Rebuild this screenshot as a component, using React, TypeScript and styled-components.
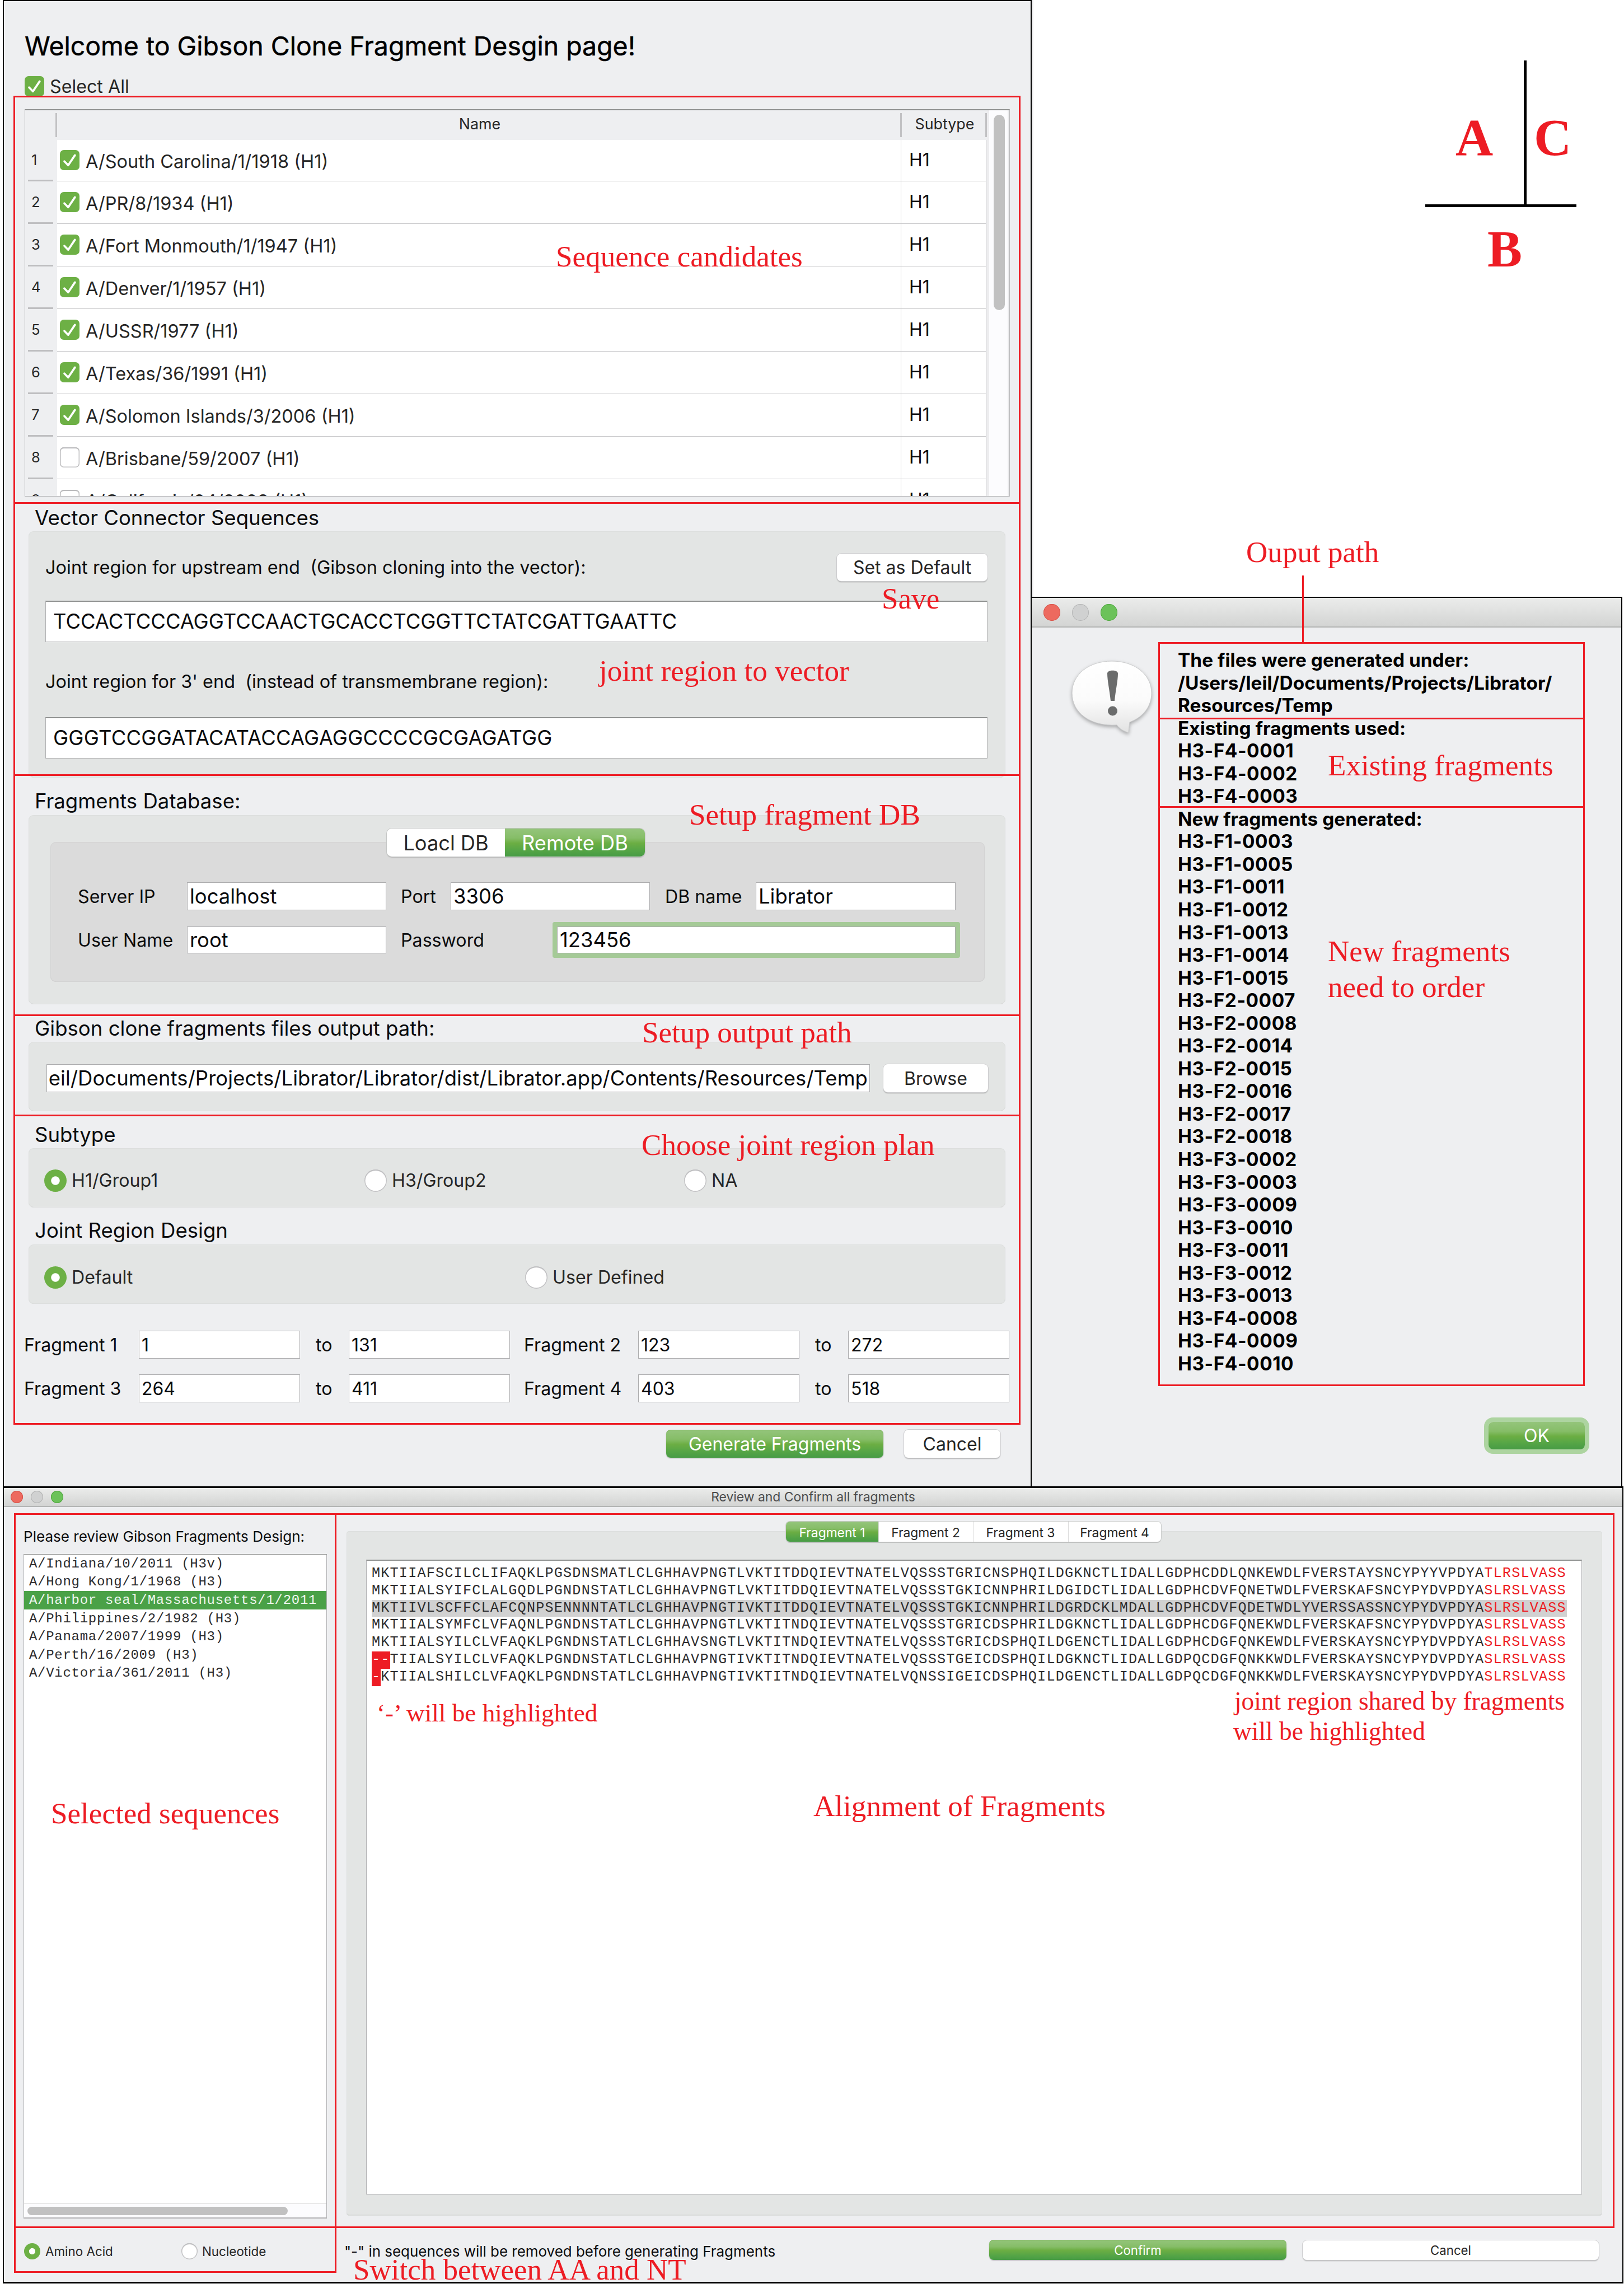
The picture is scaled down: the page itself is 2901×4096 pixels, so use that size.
import React from 'react';
import styled, { createGlobalStyle, css } from 'styled-components';

const RED = '#ed1c24';
const SANS = 'Inter, "Liberation Sans", sans-serif';
const SERIF = '"Liberation Serif", serif';
const MONO = '"Courier New", "Liberation Mono", monospace';
const GREEN = 'linear-gradient(180deg, #94c57b 0%, #86bd68 34%, #6cae43 52%, #55a546 78%, #479b45 100%)';

const Global = createGlobalStyle`
  *, *::before, *::after { box-sizing: border-box; }
  body { margin: 0; background: #fff; font-family: ${SANS}; color: #0b0c0e; }
`;

/* ---------- page frame ---------- */

const Page = styled.main`
  position: relative;
  width: 2901px;
  height: 4096px;
  padding-left: 5px;
  overflow: hidden;
  background: #fff;
`;

const UpperRow = styled.div`
  display: flex;
  height: 2655px;
`;

const SetupWindow = styled.section`
  width: 1838px;
  height: 2655px;
  flex: none;
  display: flex;
  flex-direction: column;
  border: 2px solid #000;
  border-bottom: 0;
  background: #eeeff1;
  box-shadow: 3px 0 0 #ececee;
`;

const RightColumn = styled.div`
  width: 1055px;
  flex: none;
  display: flex;
  flex-direction: column;
`;

const LegendArea = styled.div`
  height: 1066px;
  flex: none;
`;

const ResultWindow = styled.section`
  position: relative;
  height: 1589px;
  display: flex;
  flex-direction: column;
  border-top: 2px solid #000;
  border-right: 2px solid #000;
  background: #eeeff1;
`;

const ReviewWindow = styled.section`
  width: 2895px;
  height: 1424px;
  display: flex;
  flex-direction: column;
  border: 3px solid #000;
  border-left-width: 2px;
  border-right-width: 2px;
  background: #eeeff1;
`;

/* ---------- shared controls ---------- */

const buttonLook = css`
  display: flex;
  align-items: center;
  justify-content: center;
  border-radius: 8px;
  white-space: nowrap;
`;

const Button = styled.div<{ $w: number; $h?: number; $size?: number; $primary?: boolean; $ring?: boolean }>`
  ${buttonLook}
  flex: none;
  width: ${(p) => p.$w}px;
  height: ${(p) => p.$h ?? 50}px;
  font-size: ${(p) => p.$size ?? 32}px;
  color: ${(p) => (p.$primary ? '#fff' : '#262626')};
  background: ${(p) => (p.$primary ? GREEN : '#fff')};
  box-shadow: ${(p) =>
    p.$ring
      ? '0 0 0 8px #add4a0'
      : p.$primary
        ? 'inset 0 1px 0 #7db35c, 0 1px 2px rgba(0,0,0,.28)'
        : '0 0 0 1px #cdcdcf, 0 2px 2px rgba(0,0,0,.28)'};
`;

const CheckShape = styled.span<{ $on?: boolean }>`
  width: 35px;
  height: 36px;
  flex: none;
  display: block;
  border-radius: 7px;
  background: ${(p) => (p.$on ? '#6db045' : '#fff')};
  box-shadow: ${(p) => (p.$on ? 'none' : 'inset 0 0 0 1.5px #bcbcbe, inset 0 2px 1px #b0b0b2')};
`;

const Check = ({ on }: { on?: boolean }) => (
  <CheckShape $on={on}>
    {on && (
      <svg width="35" height="36" viewBox="0 0 35 36" fill="none">
        <path d="M8 20.2 L14.8 27.2 L26.8 9.4" stroke="#fff" strokeWidth="3.7" strokeLinecap="round" strokeLinejoin="round" />
      </svg>
    )}
  </CheckShape>
);

const RadioDot = styled.span<{ $on?: boolean; $d: number }>`
  width: ${(p) => p.$d}px;
  height: ${(p) => p.$d}px;
  flex: none;
  border-radius: 50%;
  background: ${(p) => (p.$on ? 'radial-gradient(circle closest-side, #fff 0 36%, #6db045 41%)' : '#fff')};
  box-shadow: ${(p) => (p.$on ? 'none' : 'inset 0 0 0 1.5px #c2c2c4, inset 0 2px 1px #b4b4b6')};
`;

const RadioItem = styled.label<{ $w?: number; $size?: number; $gap?: number; $drop?: number }>`
  display: flex;
  align-items: center;
  gap: ${(p) => p.$gap ?? 9}px;
  width: ${(p) => (p.$w ? `${p.$w}px` : 'auto')};
  padding-top: ${(p) => p.$drop ?? 0}px;
  font-size: ${(p) => p.$size ?? 32.2}px;
  line-height: 1;
  color: #262626;
  white-space: nowrap;
  span + span { padding-top: 2px; }
`;

type RadioProps = { on?: boolean; text: string; w?: number; d?: number; size?: number; gap?: number; drop?: number };

const Radio = ({ on, text, w, d = 40, size, gap, drop }: RadioProps) => (
  <RadioItem $w={w} $size={size} $gap={gap} $drop={drop}>
    <RadioDot $on={on} $d={d} />
    <span>{text}</span>
  </RadioItem>
);

const Field = styled.div<{ $w: number; $h?: number; $size?: number; $pad?: number; $end?: boolean; $focus?: boolean }>`
  width: ${(p) => p.$w}px;
  height: ${(p) => p.$h ?? 50}px;
  flex: none;
  display: flex;
  align-items: center;
  justify-content: ${(p) => (p.$end ? 'flex-end' : 'flex-start')};
  padding: 2px ${(p) => p.$pad ?? 4}px 0;
  overflow: hidden;
  border: 1px solid #acacae;
  background: #fff;
  font-size: ${(p) => p.$size ?? 36.4}px;
  letter-spacing: ${(p) => (p.$end ? '0.09px' : 'normal')};
  line-height: 1.2;
  white-space: nowrap;
  box-shadow: ${(p) => (p.$focus ? '0 0 0 8px #a5ca97' : 'none')};
  border-radius: ${(p) => (p.$focus ? '1px' : '0')};
`;

const SequenceField = styled.div<{ $top: number; $track?: number }>`
  margin-top: ${(p) => p.$top}px;
  height: 74px;
  display: flex;
  align-items: center;
  padding: 0 13px 1px;
  border: 1px solid #b2b2b4;
  border-top: 2px solid #8f9190;
  background: #fff;
  font-size: 36.4px;
  letter-spacing: ${(p) => p.$track ?? 0}px;
  white-space: nowrap;
`;

const Label = styled.span<{ $w?: number; $ml?: number; $size?: number }>`
  width: ${(p) => (p.$w ? `${p.$w}px` : 'auto')};
  margin-left: ${(p) => p.$ml ?? 0}px;
  flex: none;
  font-size: ${(p) => p.$size ?? 32.2}px;
  line-height: 1;
  padding-top: 2px;
  white-space: pre;
`;

const SectionTitle = styled.h2<{ $h: number; $top: number }>`
  height: ${(p) => p.$h}px;
  margin: 0;
  padding: ${(p) => p.$top}px 0 0 55px;
  display: flex;
  align-items: center;
  font-size: 36.6px;
  font-weight: 400;
  line-height: 1;
  white-space: nowrap;
`;

const Group = styled.div<{ $h: number; $pad: string }>`
  height: ${(p) => p.$h}px;
  width: 1745px;
  flex: none;
  margin-left: 44px;
  padding: ${(p) => p.$pad};
  border-radius: 9px;
  background: #e3e5e4;
  box-shadow: inset 0 0 0 1px #dcdedd, inset 0 -1px 0 #d2d4d3;
`;

const Line = styled.div<{ $h?: number; $top?: number; $gap?: number; $left?: number; $between?: boolean }>`
  display: flex;
  align-items: center;
  justify-content: ${(p) => (p.$between ? 'space-between' : 'flex-start')};
  height: ${(p) => (p.$h ? `${p.$h}px` : 'auto')};
  margin-top: ${(p) => p.$top ?? 0}px;
  gap: ${(p) => p.$gap ?? 0}px;
  padding-left: ${(p) => p.$left ?? 0}px;
`;

/* ---------- sequence table ---------- */

const PageTitle = styled.h1`
  margin: 26px 0 0 37px;
  height: 108px;
  display: flex;
  align-items: center;
  font-size: 46.45px;
  font-weight: 400;
  -webkit-text-stroke: 0.5px #000;
  color: #000;
  white-space: nowrap;
`;

const SelectAll = styled.div`
  display: flex;
  align-items: center;
  gap: 10px;
  height: 36px;
  margin-left: 37px;
  font-size: 32.2px;
  color: #262626;
`;

const Table = styled.div`
  width: 1760px;
  height: 692px;
  flex: none;
  margin: 23px 0 0 37px;
  display: flex;
  overflow: hidden;
  border: 1px solid #b2b2b4;
  border-top: 2px solid #8f9190;
  border-right: 2px solid #c0c0c2;
`;

const TableMain = styled.div`
  flex: 1;
  height: 689px;
  overflow: hidden;
`;

const HeadRow = styled.div`
  display: flex;
  align-items: center;
  height: 53px;
  background: #eeeff1;
  font-size: 26.8px;
  color: #262626;
`;

const HeadCell = styled.div<{ $w: number }>`
  width: ${(p) => p.$w}px;
  height: 43px;
  display: flex;
  align-items: center;
  justify-content: center;
  padding-bottom: 5px;
  padding-left: 4px;
  border-right: 3px solid #c1c1c3;
`;

const BodyRow = styled.div<{ $first?: boolean }>`
  display: flex;
  height: ${(p) => (p.$first ? 74 : 76)}px;
`;

const IndexCell = styled.div`
  width: 57px;
  display: flex;
  flex-direction: column;
  background: #eeeff1;
  font-size: 25.5px;
  color: #262626;
  span { flex: 1; display: flex; align-items: center; padding-left: 11px; }
  i { height: 3px; margin: 0 7px 0 5px; background: #bebec0; }
`;

const NameCell = styled.div`
  width: 1508px;
  display: flex;
  align-items: center;
  gap: 11px;
  padding: 0 0 1px 5px;
  background: #fff;
  border-bottom: 1px solid #c6c6c8;
  border-right: 1px solid #c6c6c8;
  font-size: 32.5px;
  color: #262626;
  b { font-weight: 400; padding-top: 4px; }
`;

const TypeCell = styled.div`
  width: 152px;
  display: flex;
  align-items: center;
  padding: 0 0 2px 14px;
  background: #fff;
  border-bottom: 1px solid #c6c6c8;
  border-right: 1px solid #c6c6c8;
  font-size: 32px;
`;

const VScroll = styled.div`
  width: 38px;
  padding: 8px 0 0 8px;
  border-left: 3px solid #ececee;
  border-right: 2px solid #ececee;
  background: #fcfcfe;
`;

const VThumb = styled.div`
  width: 20px;
  height: 349px;
  border-radius: 10px;
  background: #c1c1c1;
`;

/* ---------- database group ---------- */

const DbTabs = styled.div`
  position: relative;
  display: flex;
  width: 461px;
  height: 50px;
  margin: 0 0 -26px 640px;
  border-radius: 9px;
  overflow: hidden;
  box-shadow: 0 0 0 1px #c6c8c7, 0 2px 2px rgba(0,0,0,.2);
`;

const DbTab = styled.div<{ $w: number; $on?: boolean }>`
  width: ${(p) => p.$w}px;
  display: flex;
  align-items: center;
  justify-content: center;
  padding-top: 1px;
  font-size: 36.2px;
  background: ${(p) => (p.$on ? GREEN : '#fff')};
  color: ${(p) => (p.$on ? '#fff' : '#262626')};
`;

const DbPane = styled.div`
  height: 250px;
  margin: 0 37px 0 39px;
  padding: 72px 0 0 49px;
  border-radius: 10px;
  background: #dbdbdb;
  box-shadow: inset 0 0 0 1px #d3d3d3, inset 0 -1px 0 #c9c9c9;
`;

const Actions = styled.div`
  display: flex;
  justify-content: flex-end;
  gap: 37px;
  margin: 49px 54px 0 0;
`;

/* ---------- title bars ---------- */

const TitleBar = styled.header<{ $h: number; $gap: number; $left: number }>`
  position: relative;
  display: flex;
  align-items: center;
  gap: ${(p) => p.$gap}px;
  height: ${(p) => p.$h}px;
  flex: none;
  padding: 0 0 0 ${(p) => p.$left}px;
  background: linear-gradient(180deg, #ebeceb 0%, #d3d4d3 100%);
  border-bottom: 2px solid #b3b5b4;
`;

const Light = styled.i<{ $d: number; $c: string; $b: string }>`
  width: ${(p) => p.$d}px;
  height: ${(p) => p.$d}px;
  border-radius: 50%;
  background: ${(p) => p.$c};
  box-shadow: inset 0 0 0 1px ${(p) => p.$b};
`;

const BarTitle = styled.div`
  position: absolute;
  inset: 0;
  display: flex;
  align-items: center;
  justify-content: center;
  font-size: 22.9px;
  color: #4b4c4d;
`;

const Lights = ({ d }: { d: number }) => (
  <>
    <Light $d={d} $c="#ed6a5f" $b="#d5554b" />
    <Light $d={d} $c="#d0d1d1" $b="#b4b5b5" />
    <Light $d={d} $c="#6cc25a" $b="#52a843" />
  </>
);

/* ---------- result dialog ---------- */

const ResultBody = styled.div`
  display: flex;
  padding: 38px 0 0 66px;
`;

const Balloon = styled.svg`
  flex: none;
  width: 154px;
  height: 150px;
  margin-top: 17px;
  filter: drop-shadow(0 3px 3px rgba(0, 0, 0, 0.3));
`;

const ResultText = styled.div`
  margin-left: 41px;
  font-size: 33.45px;
  font-weight: 700;
  line-height: 40.55px;
  color: #000;
  white-space: nowrap;
  div.id { letter-spacing: 0.5px; }
`;

const ResultFoot = styled.div`
  display: flex;
  justify-content: flex-end;
  padding: 83px 65px 0 0;
`;

/* ---------- review window ---------- */

const ReviewMain = styled.div`
  display: flex;
  height: 1286px;
`;

const ReviewSide = styled.div`
  width: 612px;
  padding: 36px 0 0 35px;
`;

const SideTitle = styled.div`
  height: 32px;
  display: flex;
  align-items: center;
  font-size: 26.05px;
  white-space: nowrap;
`;

const List = styled.div`
  width: 542px;
  height: 1187px;
  margin-top: 16px;
  display: flex;
  flex-direction: column;
  border: 1px solid #b2b2b4;
  border-top-color: #8f9190;
  border-bottom: 2px solid #b2b2b4;
  background: #fff;
  font-family: ${MONO};
  font-size: 24px;
  letter-spacing: 0.72px;
`;

const ListRow = styled.div<{ $on?: boolean }>`
  height: 32.6px;
  display: flex;
  align-items: center;
  padding-left: 9px;
  white-space: pre;
  background: ${(p) => (p.$on ? '#4aa147' : 'transparent')};
  color: ${(p) => (p.$on ? '#eef6ee' : '#2c2c2e')};
`;

const HScroll = styled.div`
  height: 26px;
  margin-top: auto;
  padding: 5px 6px 0;
  border-top: 2px solid #e9e9e9;
  background: #fcfcfe;
`;

const HThumb = styled.div`
  width: 465px;
  height: 15px;
  border-radius: 8px;
  background: #c1c1c1;
`;

const ReviewStage = styled.div`
  flex: 1;
  padding-top: 26px;
`;

const StageTabs = styled.div`
  position: relative;
  display: flex;
  width: 670px;
  height: 36px;
  margin: 0 0 -19px 785px;
  border-radius: 7px;
  overflow: hidden;
  box-shadow: 0 0 0 1px #cbcdcc, 0 2px 1px rgba(0,0,0,.18);
`;

const StageTab = styled.div<{ $w: number; $on?: boolean }>`
  width: ${(p) => p.$w}px;
  display: flex;
  align-items: center;
  justify-content: center;
  padding-top: 2px;
  font-size: 22.8px;
  background: ${(p) => (p.$on ? GREEN : '#fff')};
  color: ${(p) => (p.$on ? '#fff' : '#262626')};
  & + & { box-shadow: inset 1px 0 0 #dcdcdc; }
`;

const StagePane = styled.div`
  width: 2243px;
  height: 1223px;
  padding: 51px 36px 0 35px;
  border-radius: 5px;
  background: #e3e5e4;
  box-shadow: inset 0 0 0 1px #dcdedd, inset 0 -2px 0 #d4d6d5;
`;

const Alignment = styled.div`
  height: 1134px;
  padding: 8px 0 0 9px;
  border: 1px solid #b2b2b4;
  border-top: 2px solid #8f9190;
  background: #fff;
  font-family: ${MONO};
  font-size: 25.2px;
  letter-spacing: 1.174px;
  line-height: 30.8px;
  color: #2c2c2e;
`;

const SeqRow = styled.div<{ $on?: boolean }>`
  width: 2135px;
  height: 30.8px;
  white-space: pre;
  background: ${(p) => (p.$on ? '#d1d1d1' : 'transparent')};
`;

const Gap = styled.span`
  display: inline-block;
  height: 30.8px;
  vertical-align: top;
  background: ${RED};
  color: #fff;
`;

const Joint = styled.span`
  color: ${RED};
`;

const ReviewFoot = styled.footer`
  display: flex;
  align-items: center;
  height: 40px;
  margin-top: 21px;
  padding-left: 36px;
`;

const FootNote = styled.span`
  width: 1152px;
  padding-top: 5px;
  font-size: 25.95px;
  white-space: nowrap;
`;

/* ---------- annotations laid over the windows ---------- */

const Note = styled.div<{ $x: number; $base: number; $size?: number; $bold?: boolean }>`
  position: absolute;
  left: ${(p) => p.$x}px;
  top: ${(p) => p.$base - 0.8375 * (p.$size ?? 53.1)}px;
  font-family: ${SERIF};
  font-size: ${(p) => p.$size ?? 53.1}px;
  font-weight: ${(p) => (p.$bold ? 700 : 400)};
  line-height: 1;
  color: ${RED};
  white-space: nowrap;
`;

const Outline = styled.div<{ $x1: number; $y1: number; $x2: number; $y2: number }>`
  position: absolute;
  left: ${(p) => p.$x1 - 1}px;
  top: ${(p) => p.$y1 - 1}px;
  width: ${(p) => p.$x2 - p.$x1 + 3}px;
  height: ${(p) => p.$y2 - p.$y1 + 3}px;
  border: 3px solid ${RED};
`;

const Rule = styled.div<{ $x: number; $y: number; $w: number; $h: number; $c?: string }>`
  position: absolute;
  left: ${(p) => p.$x}px;
  top: ${(p) => p.$y}px;
  width: ${(p) => p.$w}px;
  height: ${(p) => p.$h}px;
  background: ${(p) => p.$c ?? '#000'};
`;

/* ---------- data ---------- */

const CANDIDATES: [string, boolean][] = [
  ['A/South Carolina/1/1918 (H1)', true],
  ['A/PR/8/1934 (H1)', true],
  ['A/Fort Monmouth/1/1947 (H1)', true],
  ['A/Denver/1/1957 (H1)', true],
  ['A/USSR/1977 (H1)', true],
  ['A/Texas/36/1991 (H1)', true],
  ['A/Solomon Islands/3/2006 (H1)', true],
  ['A/Brisbane/59/2007 (H1)', false],
  ['A/California/04/2009 (H1)', false],
];

const EXISTING = ['H3-F4-0001', 'H3-F4-0002', 'H3-F4-0003'];
const CREATED = [
  'H3-F1-0003', 'H3-F1-0005', 'H3-F1-0011', 'H3-F1-0012', 'H3-F1-0013', 'H3-F1-0014', 'H3-F1-0015',
  'H3-F2-0007', 'H3-F2-0008', 'H3-F2-0014', 'H3-F2-0015', 'H3-F2-0016', 'H3-F2-0017', 'H3-F2-0018',
  'H3-F3-0002', 'H3-F3-0003', 'H3-F3-0009', 'H3-F3-0010', 'H3-F3-0011', 'H3-F3-0012', 'H3-F3-0013',
  'H3-F4-0008', 'H3-F4-0009', 'H3-F4-0010',
];

const STRAINS = [
  'A/Indiana/10/2011 (H3v)',
  'A/Hong Kong/1/1968 (H3)',
  'A/harbor seal/Massachusetts/1/2011',
  'A/Philippines/2/1982 (H3)',
  'A/Panama/2007/1999 (H3)',
  'A/Perth/16/2009 (H3)',
  'A/Victoria/361/2011 (H3)',
];

const ALIGNED: [string, string, string][] = [
  ['', 'MKTIIAFSCILCLIFAQKLPGSDNSMATLCLGHHAVPNGTLVKTITDDQIEVTNATELVQSSSTGRICNSPHQILDGKNCTLIDALLGDPHCDDLQNKEWDLFVERSTAYSNCYPYYVPDYA', 'TLRSLVASS'],
  ['', 'MKTIIALSYIFCLALGQDLPGNDNSTATLCLGHHAVPNGTLVKTITDDQIEVTNATELVQSSSTGKICNNPHRILDGIDCTLIDALLGDPHCDVFQNETWDLFVERSKAFSNCYPYDVPDYA', 'SLRSLVASS'],
  ['', 'MKTIIVLSCFFCLAFCQNPSENNNNTATLCLGHHAVPNGTIVKTITDDQIEVTNATELVQSSSTGKICNNPHRILDGRDCKLMDALLGDPHCDVFQDETWDLYVERSSASSNCYPYDVPDYA', 'SLRSLVASS'],
  ['', 'MKTIIALSYMFCLVFAQNLPGNDNSTATLCLGHHAVPNGTLVKTITNDQIEVTNATELVQSSSTGRICDSPHRILDGKNCTLIDALLGDPHCDGFQNEKWDLFVERSKAFSNCYPYDVPDYA', 'SLRSLVASS'],
  ['', 'MKTIIALSYILCLVFAQKLPGNDNSTATLCLGHHAVSNGTLVKTITNDQIEVTNATELVQSSSTGRICDSPHQILDGENCTLIDALLGDPHCDGFQNKEWDLFVERSKAYSNCYPYDVPDYA', 'SLRSLVASS'],
  ['--', 'TIIALSYILCLVFAQKLPGNDNSTATLCLGHHAVPNGTIVKTITNDQIEVTNATELVQSSSTGEICDSPHQILDGKNCTLIDALLGDPQCDGFQNKKWDLFVERSKAYSNCYPYDVPDYA', 'SLRSLVASS'],
  ['-', 'KTIIALSHILCLVFAQKLPGNDNSTATLCLGHHAVPNGTIVKTITNDQIEVTNATELVQNSSIGEICDSPHQILDGENCTLIDALLGDPQCDGFQNKKWDLFVERSKAYSNCYPYDVPDYA', 'SLRSLVASS'],
];

const RANGES: [string, string, string][][] = [
  [['Fragment 1', '1', '131'], ['Fragment 2', '123', '272']],
  [['Fragment 3', '264', '411'], ['Fragment 4', '403', '518']],
];

const SETUP_STOPS = [172, 898, 1384, 1813, 1992, 2543];

/* ---------- windows ---------- */

const SetupPanel = () => (
  <SetupWindow>
    <PageTitle>Welcome to Gibson Clone Fragment Desgin page!</PageTitle>
    <SelectAll><Check on />Select All</SelectAll>
    <Table>
      <TableMain>
        <HeadRow>
          <HeadCell $w={57} />
          <HeadCell $w={1509}>Name</HeadCell>
          <HeadCell $w={152}>Subtype</HeadCell>
        </HeadRow>
        {CANDIDATES.map(([name, on], i) => (
          <BodyRow key={name} $first={i === 0}>
            <IndexCell><span>{i + 1}</span><i /></IndexCell>
            <NameCell><Check on={on} /><b>{name}</b></NameCell>
            <TypeCell>H1</TypeCell>
          </BodyRow>
        ))}
      </TableMain>
      <VScroll><VThumb /></VScroll>
    </Table>

    <SectionTitle $h={62} $top={14}>Vector Connector Sequences</SectionTitle>
    <Group $h={440} $pad="40px 32px 0 30px">
      <Line $h={49} $between>
        <Label $size={32.5}>{'Joint region for upstream end  (Gibson cloning into the vector):'}</Label>
        <Button $w={269} $h={49}>Set as Default</Button>
      </Line>
      <SequenceField $top={35}>TCCACTCCCAGGTCCAACTGCACCTCGGTTCTATCGATTGAATTC</SequenceField>
      <Line $h={40} $top={50}>
        <Label $size={32.4}>{"Joint region for 3' end  (instead of transmembrane region):"}</Label>
      </Line>
      <SequenceField $top={44} $track={0.22}>GGGTCCGGATACATACCAGAGGCCCCGCGAGATGG</SequenceField>
    </Group>

    <SectionTitle $h={67} $top={17}>Fragments Database:</SectionTitle>
    <Group $h={338} $pad="24px 0 0">
      <DbTabs>
        <DbTab $w={211}>Loacl DB</DbTab>
        <DbTab $w={250} $on>Remote DB</DbTab>
      </DbTabs>
      <DbPane>
        <Line $h={50}>
          <Label $w={195}>Server IP</Label><Field $w={356}>localhost</Field>
          <Label $ml={26} $w={89}>Port</Label><Field $w={356}>3306</Field>
          <Label $ml={27} $w={162}>DB name</Label><Field $w={357}>Librator</Field>
        </Line>
        <Line $h={48} $top={29}>
          <Label $w={195}>User Name</Label><Field $w={356} $h={48}>root</Field>
          <Label $ml={26} $w={279}>Password</Label><Field $w={712} $h={48} $focus>123456</Field>
        </Line>
      </DbPane>
    </Group>

    <SectionTitle $h={67} $top={19}>Gibson clone fragments files output path:</SectionTitle>
    <Group $h={124} $pad="40px 0 0 32px">
      <Line $gap={24}>
        <Field $w={1471} $pad={3} $end>eil/Documents/Projects/Librator/Librator/dist/Librator.app/Contents/Resources/Temp</Field>
        <Button $w={187}>Browse</Button>
      </Line>
    </Group>

    <SectionTitle $h={66} $top={18}>Subtype</SectionTitle>
    <Group $h={106} $pad="9px 0 0 28px">
      <Line $h={97}>
        <Radio on text="H1/Group1" w={572} />
        <Radio text="H3/Group2" w={571} />
        <Radio text="NA" />
      </Line>
    </Group>

    <SectionTitle $h={66} $top={16}>Joint Region Design</SectionTitle>
    <Group $h={106} $pad="10px 0 0 28px">
      <Line $h={97}>
        <Radio on text="Default" w={859} />
        <Radio text="User Defined" />
      </Line>
    </Group>

    {RANGES.map((pair, i) => (
      <Line key={i} $h={50} $top={i ? 28 : 48} $left={36}>
        {pair.map(([name, from, to], j) => (
          <React.Fragment key={name}>
            <Label $ml={j ? 25 : 0} $w={j ? 204 : 205}>{name}</Label>
            <Field $w={288} $size={32}>{from}</Field>
            <Label $ml={28} $w={59}>to</Label>
            <Field $w={288} $size={32}>{to}</Field>
          </React.Fragment>
        ))}
      </Line>
    ))}

    <Actions>
      <Button $w={388} $primary>Generate Fragments</Button>
      <Button $w={172}>Cancel</Button>
    </Actions>
  </SetupWindow>
);

const ResultPanel = () => (
  <ResultWindow>
    <TitleBar $h={53} $gap={21} $left={21}><Lights d={30} /></TitleBar>
    <ResultBody>
      <Balloon viewBox="0 0 154 150">
        <defs>
          <linearGradient id="bubble" x1="0" y1="0" x2="0" y2="1">
            <stop offset="0" stopColor="#ffffff" />
            <stop offset="0.55" stopColor="#fbfbfb" />
            <stop offset="1" stopColor="#e2e2e2" />
          </linearGradient>
        </defs>
        <path
          d="M77 5 C118 5 148 29 148 62 C148 86 133 105 109 114 C108 122 107 128 107 133 C98 130 91 126 86 119 C40 122 6 98 6 62 C6 29 36 5 77 5 Z"
          fill="url(#bubble)"
          stroke="#c9cacb"
          strokeWidth="1"
        />
        <path d="M69 27 C69 20 88 20 88 27 C88 40 84 56 82 76 L75 76 C73 56 69 40 69 27 Z" fill="#6b6c6c" />
        <circle cx="78.5" cy="94" r="8.5" fill="#6b6c6c" />
      </Balloon>
      <ResultText>
        <div>The files were generated under:</div>
        <div>/Users/leil/Documents/Projects/Librator/</div>
        <div>Resources/Temp</div>
        <div>Existing fragments used:</div>
        {EXISTING.map((id) => <div className="id" key={id}>{id}</div>)}
        <div>New fragments generated:</div>
        {CREATED.map((id) => <div className="id" key={id}>{id}</div>)}
      </ResultText>
    </ResultBody>
    <ResultFoot><Button $w={172} $h={49} $primary $ring>OK</Button></ResultFoot>
  </ResultWindow>
);

const ReviewPanel = () => (
  <ReviewWindow>
    <TitleBar $h={34} $gap={14} $left={12}>
      <Lights d={22} />
      <BarTitle>Review and Confirm all fragments</BarTitle>
    </TitleBar>
    <ReviewMain>
      <ReviewSide>
        <SideTitle>Please review Gibson Fragments Design:</SideTitle>
        <List>
          {STRAINS.map((name, i) => <ListRow key={name} $on={i === 2}>{name}</ListRow>)}
          <HScroll><HThumb /></HScroll>
        </List>
      </ReviewSide>
      <ReviewStage>
        <StageTabs>
          <StageTab $w={165} $on>Fragment 1</StageTab>
          <StageTab $w={169}>Fragment 2</StageTab>
          <StageTab $w={170}>Fragment 3</StageTab>
          <StageTab $w={166}>Fragment 4</StageTab>
        </StageTabs>
        <StagePane>
          <Alignment>
            {ALIGNED.map(([gap, body, joint], i) => (
              <SeqRow key={i} $on={i === 2}>{gap && <Gap>{gap}</Gap>}{body}<Joint>{joint}</Joint></SeqRow>
            ))}
          </Alignment>
        </StagePane>
      </ReviewStage>
    </ReviewMain>
    <ReviewFoot>
      <Radio on text="Amino Acid" w={281} d={29} size={22.4} gap={9} drop={4} />
      <Radio text="Nucleotide" w={291} d={29} size={22.4} gap={8} drop={4} />
      <FootNote>"-" in sequences will be removed before generating Fragments</FootNote>
      <Line $gap={29}>
        <Button $w={531} $h={36} $size={22.2} $primary>Confirm</Button>
        <Button $w={529} $h={35} $size={22.2}>Cancel</Button>
      </Line>
    </ReviewFoot>
  </ReviewWindow>
);

const Annotations = () => (
  <>
    <Rule $x={2722} $y={108} $w={5} $h={258} />
    <Rule $x={2546} $y={365} $w={270} $h={5} />
    <Note $x={2600} $base={277} $size={93} $bold>A</Note>
    <Note $x={2740} $base={277} $size={93} $bold>C</Note>
    <Note $x={2657} $base={476} $size={93} $bold>B</Note>

    {SETUP_STOPS.slice(1).map((y, i) => (
      <Outline key={y} $x1={25} $y1={SETUP_STOPS[i]} $x2={1821} $y2={y} />
    ))}
    <Note $x={993} $base={476.3}>Sequence candidates</Note>
    <Note $x={1575} $base={1087.4}>Save</Note>
    <Note $x={1070} $base={1216.5}>joint region to vector</Note>
    <Note $x={1231} $base={1473.6}>Setup fragment DB</Note>
    <Note $x={1147} $base={1862.5}>Setup output path</Note>
    <Note $x={1146} $base={2063.7}>Choose joint region plan</Note>

    <Rule $x={2326} $y={1028} $w={3} $h={120} $c={RED} />
    <Outline $x1={2070} $y1={1148} $x2={2829} $y2={1283} />
    <Outline $x1={2070} $y1={1283} $x2={2829} $y2={1441} />
    <Outline $x1={2070} $y1={1441} $x2={2829} $y2={2474} />
    <Note $x={2226} $base={1004}>Ouput path</Note>
    <Note $x={2372} $base={1385.3}>Existing fragments</Note>
    <Note $x={2372} $base={1717}>New fragments</Note>
    <Note $x={2372} $base={1781}>need to order</Note>

    <Outline $x1={26} $y1={2704} $x2={599} $y2={3978} />
    <Outline $x1={599} $y1={2704} $x2={2882} $y2={3978} />
    <Outline $x1={26} $y1={3978} $x2={599} $y2={4058} />
    <Note $x={673} $base={3076} $size={45.2}>‘-’ will be highlighted</Note>
    <Note $x={2205} $base={3055} $size={45.4}>joint region shared by fragments</Note>
    <Note $x={2203} $base={3109.5} $size={45.4}>will be highlighted</Note>
    <Note $x={1453} $base={3244}>Alignment of Fragments</Note>
    <Note $x={91} $base={3257}>Selected sequences</Note>
    <Note $x={631} $base={4072.7} $size={53}>Switch between AA and NT</Note>
  </>
);

export default function App() {
  return (
    <Page>
      <Global />
      <UpperRow>
        <SetupPanel />
        <RightColumn>
          <LegendArea />
          <ResultPanel />
        </RightColumn>
      </UpperRow>
      <ReviewPanel />
      <Annotations />
    </Page>
  );
}
